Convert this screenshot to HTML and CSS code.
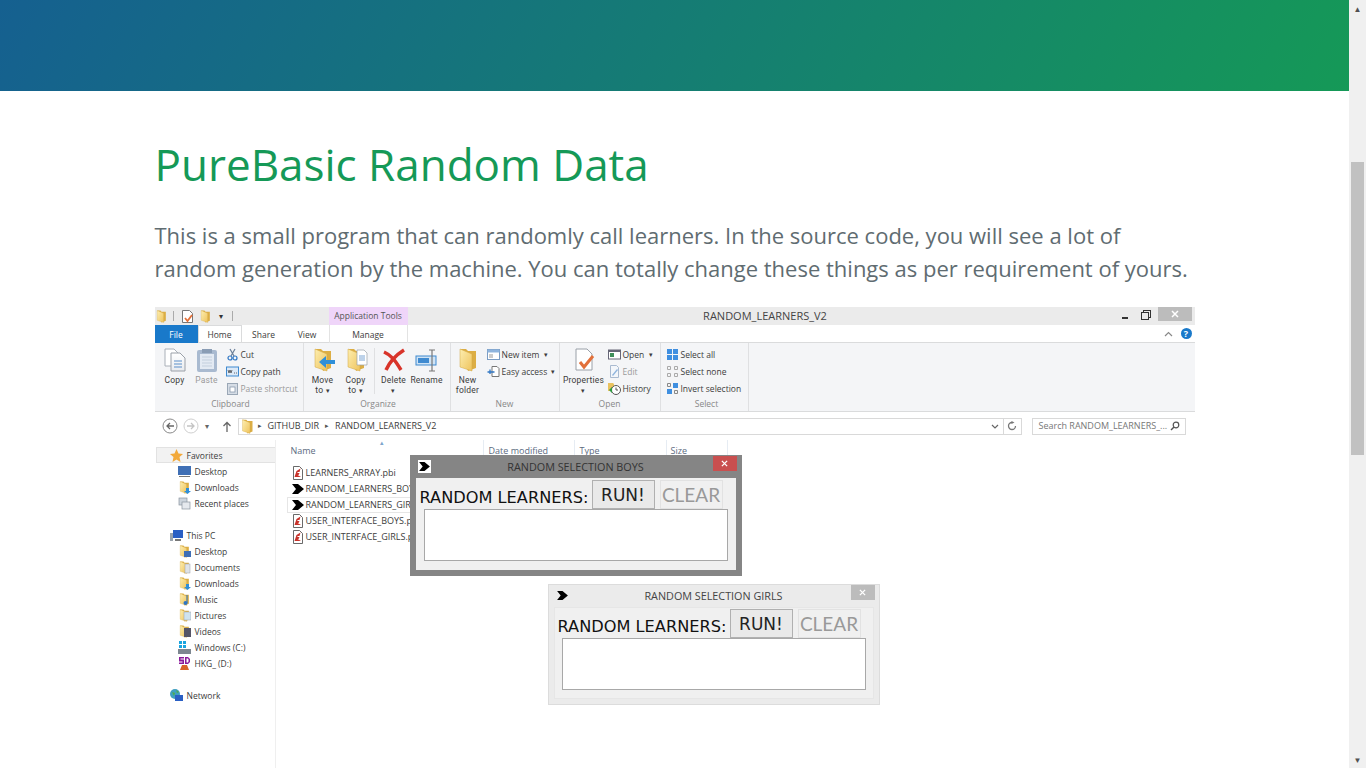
FILE: index.html
```html
<!DOCTYPE html>
<html>
<head>
  <title>PureBasic Random Data</title>
  <link rel="stylesheet" href="styles.css">
</head>
<body>
  <svg class="defs" width="0" height="0">
    <defs>
      <linearGradient id="folderfront" x1="0" y1="0" x2="1" y2="1"><stop offset="0" stop-color="#fdeeb0"/><stop offset="1" stop-color="#eec35c"/></linearGradient>
      <linearGradient id="pagefill" x1="0" y1="0" x2="0" y2="1"><stop offset="0" stop-color="#fff"/><stop offset="1" stop-color="#e8ebef"/></linearGradient>
    </defs>
    <symbol id="folder" viewBox="0 0 24 24"><path d="M4 1h6l2 2h8v17l-8 3z" fill="#dcae45"/><path d="M4 1l12 5v17L4 19z" fill="url(#folderfront)" stroke="#d3a641" stroke-width=".5"/></symbol>
    <symbol id="pbfile" viewBox="0 0 12 14"><path d="M1.500 .5h6l3 3v10h-9z" fill="#fff" stroke="#444" stroke-width=".8"/><path d="M2.500 11l2-6 4-2.500-1 3.500H5.500v1h2l-1 2H5.500l3.500 2z" fill="#c8322a"/></symbol>
    <symbol id="chevron" viewBox="0 0 12 10"><path d="M0 0h6l6 5-6 5H0l4-5z" fill="#000"/></symbol>
    <symbol id="doc" viewBox="0 0 24 24"><path d="M4 1h11l5 5v17H4z" fill="url(#pagefill)" stroke="#9aa0a8"/><path d="M15 1v5h5" fill="#e6e8ea" stroke="#9aa0a8"/></symbol>
    <symbol id="close" viewBox="0 0 8 8"><path d="M1 1l6 6M7 1L1 7" stroke="#fff" stroke-width="1.500"/></symbol>
  </svg>

  <div class="page">
    <div class="content">
      <header class="banner"></header>
      <main class="main">
        <h1>PureBasic Random Data</h1>
        <p class="intro">This is a small program that can randomly call learners. In the source code, you will see a lot of random generation by the machine. You can totally change these things as per requirement of yours.</p>

        <div class="shot">
          <div class="titlebar">
            <div class="qat">
              <svg class="ic13"><use href="#folder"/></svg><i class="qat-sep"></i>
              <svg class="ic13 qat-doc" viewBox="0 0 13 13"><path d="M1.500 .5h7l3 3v9h-10z" fill="#fff" stroke="#777"/><path d="M4 8l2.500 3L11 5" fill="none" stroke="#e2703a" stroke-width="1.800"/></svg>
              <svg class="ic13"><use href="#folder"/></svg>
              <span class="qat-drop">▾</span><i class="qat-sep"></i>
            </div>
            <div class="apptools">Application Tools</div>
            <div class="wintitle">RANDOM_LEARNERS_V2</div>
            <div class="winbtns">
              <i class="min"></i><i class="max"></i>
              <span class="winclose"><svg width="8" height="8"><use href="#close"/></svg></span>
            </div>
          </div>

          <div class="tabs">
            <span class="tab tab-file">File</span>
            <span class="tab tab-active">Home</span>
            <span class="tab tab-share">Share</span>
            <span class="tab tab-view">View</span>
            <span class="tab tab-manage">Manage</span>
            <span class="tabs-end">
              <svg width="9" height="6" viewBox="0 0 9 6"><path d="M1 5l3.500-3.500L8 5" fill="none" stroke="#888" stroke-width="1.200"/></svg>
              <span class="help">?</span>
            </span>
          </div>

          <div class="ribbon">
            <section class="group g-clip">
              <div class="group-body">
                <div class="big"><svg class="ic24" viewBox="0 0 24 24"><path d="M2 1h9l4 4v13H2z" fill="#fff" stroke="#aab0b8"/><path d="M8 5h9l5 5v13H8z" fill="url(#pagefill)" stroke="#9aa0a8"/><path d="M11 13h8M11 16h8M11 19h8" stroke="#5b8fc9"/></svg><span>Copy</span></div>
                <div class="big muted"><svg class="ic24" viewBox="0 0 24 24"><rect x="2" y="2" width="20" height="22" rx="2" fill="#a9bad0"/><path d="M5 6h14v15H5z" fill="#e3eaf3"/><path d="M7 9h10M7 12h10M7 15h10M7 18h10" stroke="#c3cfdd"/><path d="M7 1h10v4H7z" fill="#8a9db5"/></svg><span>Paste</span></div>
                <div class="smalls">
                  <div class="small"><svg class="ic13" viewBox="0 0 13 13"><path d="M4 1l4 7M9 1L5 8" stroke="#6a7f99" stroke-width="1.200"/><circle cx="4" cy="10" r="2" fill="none" stroke="#2f76c4" stroke-width="1.200"/><circle cx="9" cy="10" r="2" fill="none" stroke="#2f76c4" stroke-width="1.200"/></svg>Cut</div>
                  <div class="small"><svg class="ic13" viewBox="0 0 13 13"><rect x=".5" y="2" width="12" height="9" fill="#dce9f7" stroke="#3f8ad0"/><path d="M2 5l1 3 1-3 1 3 1-3M8 8h1M10 8h1" stroke="#333" stroke-width=".7" fill="none"/></svg>Copy path</div>
                  <div class="small muted"><svg class="ic13" viewBox="0 0 13 13"><rect x="1.500" y="1.500" width="10" height="11" fill="#d6dde6" stroke="#9aa7b6"/><rect x="4" y="5" width="5" height="5" fill="#fff" stroke="#7d8ea3" stroke-width=".7"/></svg>Paste shortcut</div>
                </div>
              </div>
              <div class="group-name">Clipboard</div>
            </section>

            <section class="group g-org">
              <div class="group-body">
                <div class="big"><svg class="ic24"><use href="#folder"/><path d="M24 12h-9V8l-7 6 7 6v-4h9z" fill="#2f8fd8"/></svg><span>Move<br>to <b class="caret">▾</b></span></div>
                <div class="big"><svg class="ic24"><use href="#folder"/><path d="M13 2h7l3 3v12H13z" fill="#fff" stroke="#9aa0a8" stroke-width=".7"/><path d="M15 8h6M15 10h6M15 12h6" stroke="#5b8fc9" stroke-width=".8"/></svg><span>Copy<br>to <b class="caret">▾</b></span></div>
                <i class="vsep"></i>
                <div class="big"><svg class="ic24" viewBox="0 0 24 24"><path d="M2 4c7 3 11 8 17 18M22 2C14 7 8 13 4 22" fill="none" stroke="#d8342a" stroke-width="3.500"/></svg><span>Delete<br><b class="caret">▾</b></span></div>
                <div class="big"><svg class="ic24" viewBox="0 0 24 24"><rect x="1" y="8" width="20" height="9" fill="#cfe3f5" stroke="#3f8ad0"/><rect x="3" y="10" width="11" height="5" fill="#3f8ad0"/><path d="M14 2h6M14 23h6M17 2v21" stroke="#777" stroke-width="1.200"/></svg><span>Rename</span></div>
              </div>
              <div class="group-name">Organize</div>
            </section>

            <section class="group g-new">
              <div class="group-body">
                <div class="big big-new"><svg class="ic24"><use href="#folder"/></svg><span>New<br>folder</span></div>
                <div class="smalls">
                  <div class="small"><svg class="ic13" viewBox="0 0 13 13"><rect x=".5" y="1.500" width="12" height="10" fill="#fff" stroke="#7a9cc4"/><path d="M.5 1.500h12v3H.5z" fill="#8fb4dd"/><path d="M2 7h4M2 9h4" stroke="#999"/></svg>New item <b class="caret">▾</b></div>
                  <div class="small"><svg class="ic13" viewBox="0 0 13 13"><path d="M5 1.500h5l2 2v8H5z" fill="#fff" stroke="#777"/><path d="M.5 7h7M3 4.500V9" stroke="#2f76c4" stroke-width="1.300"/></svg>Easy access <b class="caret">▾</b></div>
                </div>
              </div>
              <div class="group-name">New</div>
            </section>

            <section class="group g-open">
              <div class="group-body">
                <div class="big big-prop"><svg class="ic24" viewBox="0 0 24 24"><path d="M4 1h11l5 5v16H4z" fill="#fff" stroke="#9aa0a8"/><path d="M8 14l4 5 9-11" fill="none" stroke="#e2703a" stroke-width="3"/></svg><span>Properties<br><b class="caret">▾</b></span></div>
                <div class="smalls">
                  <div class="small"><svg class="ic13" viewBox="0 0 13 13"><rect x=".5" y="2" width="12" height="9" fill="#fff" stroke="#667"/><path d="M.5 2h12v2H.5z" fill="#667"/><rect x="2" y="5" width="4" height="4" fill="#3f8f5a"/></svg>Open <b class="caret">▾</b></div>
                  <div class="small muted"><svg class="ic13" viewBox="0 0 13 13"><path d="M2.500 .5h6l2 2v10h-8z" fill="#f3f6fa" stroke="#a9bad0"/><path d="M4 10l5-6 1 1-5 6z" fill="#8fb4dd"/></svg>Edit</div>
                  <div class="small"><svg class="ic13" viewBox="0 0 13 13"><path d="M0 1h5l1 1v7H0z" fill="#e9c25f"/><circle cx="8" cy="8" r="4.500" fill="#fff" stroke="#555"/><path d="M8 5.500V8h2" stroke="#555" fill="none"/><path d="M1 8l3-3v6z" fill="#2f9a3f"/></svg>History</div>
                </div>
              </div>
              <div class="group-name">Open</div>
            </section>

            <section class="group g-sel">
              <div class="group-body">
                <div class="smalls">
                  <div class="small"><svg class="ic13" viewBox="0 0 13 13"><path d="M1 1h5v5H1zM7 1h5v5H7zM1 7h5v5H1zM7 7h5v5H7z" fill="#3f8fe0"/></svg>Select all</div>
                  <div class="small"><svg class="ic13" viewBox="0 0 13 13"><path d="M1.500 1.500h3v3h-3zM8.500 1.500h3v3h-3zM1.500 8.500h3v3h-3zM8.500 8.500h3v3h-3z" fill="none" stroke="#aaa"/></svg>Select none</div>
                  <div class="small"><svg class="ic13" viewBox="0 0 13 13"><path d="M1.500 1.500h3v3h-3zM8.500 8.500h3v3h-3z" fill="none" stroke="#888"/><path d="M7 1h5v5H7zM1 7h5v5H1z" fill="#3f8fe0"/></svg>Invert selection</div>
                </div>
              </div>
              <div class="group-name">Select</div>
            </section>
          </div>

          <div class="addressbar">
            <span class="navbtn"><svg width="16" height="16" viewBox="0 0 16 16"><circle cx="8" cy="8" r="7" fill="#fff" stroke="#8a8a8a"/><path d="M12 8H5M8 5L5 8l3 3" fill="none" stroke="#666" stroke-width="1.300"/></svg></span>
            <span class="navbtn"><svg width="16" height="16" viewBox="0 0 16 16"><circle cx="8" cy="8" r="7" fill="#fff" stroke="#d0d0d0"/><path d="M4 8h7M8 5l3 3-3 3" fill="none" stroke="#c4c4c4" stroke-width="1.300"/></svg></span>
            <span class="navdrop">▾</span>
            <span class="navup"><svg width="10" height="11" viewBox="0 0 10 11"><path d="M5 11V2M1.500 5L5 1.500 8.500 5" fill="none" stroke="#666" stroke-width="1.300"/></svg></span>
            <div class="pathbox">
              <svg class="ic15 path-folder"><use href="#folder"/></svg>
              <span class="crumb-arrow">▸</span><span>GITHUB_DIR</span>
              <span class="crumb-arrow">▸</span><span>RANDOM_LEARNERS_V2</span>
              <span class="path-drop"><svg width="8" height="5" viewBox="0 0 8 5"><path d="M1 1l3 3 3-3" fill="none" stroke="#666" stroke-width="1.200"/></svg></span>
              <span class="path-refresh"><svg width="10" height="10" viewBox="0 0 10 10"><path d="M8.500 5A3.500 3.500 0 1 1 5 1.500" fill="none" stroke="#777" stroke-width="1.300"/><path d="M4.500 0l3 1.500-3 1.500z" fill="#777"/></svg></span>
            </div>
            <div class="searchbox">Search RANDOM_LEARNERS_...<svg width="10" height="10" viewBox="0 0 10 10"><circle cx="6" cy="4" r="2.800" fill="none" stroke="#555" stroke-width="1.200"/><path d="M4 6L1 9" stroke="#555" stroke-width="1.500"/></svg></div>
          </div>

          <div class="explorer">
            <nav class="navpane">
              <div class="nav-row nav-top nav-hover"><svg class="ic13" viewBox="0 0 13 13"><path d="M6.500 0l2 4.500 4.500.5-3.500 3 1 5-4-2.500L2.500 13l1-5L0 5l4.500-.5z" fill="#f2a93b"/></svg>Favorites</div>
              <div class="nav-row"><svg class="ic13" viewBox="0 0 13 13"><rect y="1" width="13" height="9" fill="#3f6fb5"/><path d="M1 11h11v1H1z" fill="#777"/></svg>Desktop</div>
              <div class="nav-row"><svg class="ic13"><use href="#folder"/><path d="M8 7h3v3h2l-3.500 3L6 10h2z" fill="#2f8fd8"/></svg>Downloads</div>
              <div class="nav-row"><svg class="ic13" viewBox="0 0 13 13"><rect x="1" y="1" width="8" height="7" fill="#cdd5dd" stroke="#8a949e" stroke-width=".7"/><rect x="4" y="5" width="8" height="7" fill="#e5e9ee" stroke="#8a949e" stroke-width=".7"/></svg>Recent places</div>
              <div class="nav-row nav-top nav-gap"><svg class="ic13" viewBox="0 0 13 13"><path d="M3 1h10v8H3z" fill="#2a5fc4"/><path d="M0 4h3v8H0z" fill="#9aa3ad"/><path d="M5 10h6v2H5z" fill="#777"/></svg>This PC</div>
              <div class="nav-row"><svg class="ic13"><use href="#folder"/><rect x="6" y="6" width="7" height="6" fill="#3f6fb5"/></svg>Desktop</div>
              <div class="nav-row"><svg class="ic13"><use href="#folder"/><rect x="7" y="3" width="5" height="9" fill="#dfe3e8" stroke="#9aa0a8" stroke-width=".5"/></svg>Documents</div>
              <div class="nav-row"><svg class="ic13"><use href="#folder"/><path d="M8 7h3v3h2l-3.500 3L6 10h2z" fill="#2f8fd8"/></svg>Downloads</div>
              <div class="nav-row"><svg class="ic13"><use href="#folder"/><path d="M9 2v8" stroke="#2f76c4"/><circle cx="7.500" cy="10" r="2" fill="#2f76c4"/></svg>Music</div>
              <div class="nav-row"><svg class="ic13"><use href="#folder"/><rect x="6" y="3" width="7" height="8" fill="#cfe3f0" stroke="#9aa0a8" stroke-width=".5"/></svg>Pictures</div>
              <div class="nav-row"><svg class="ic13"><use href="#folder"/><rect x="6" y="3" width="7" height="9" fill="#556"/></svg>Videos</div>
              <div class="nav-row"><svg class="ic13" viewBox="0 0 13 13"><path d="M1 0h3v3H1zM5 0h3v3H5zM1 4h3v3H1zM5 4h3v3H5z" fill="#19a5e0"/><rect y="8" width="13" height="5" fill="#7d8790"/></svg>Windows (C:)</div>
              <div class="nav-row"><svg class="ic13" viewBox="0 0 13 13"><path d="M1 0h5v1.500H2.500v1H6V7H1V5.500h3.500v-1H1zM7 0h3l2 2v3l-2 2H7zm1.500 1.500v4H10l.5-1v-2l-.5-1z" fill="#8a1a9a"/><path d="M4 8h5l2 5H2z" fill="#d8642a"/></svg>HKG_ (D:)</div>
              <div class="nav-row nav-top nav-gap"><svg class="ic13" viewBox="0 0 13 13"><circle cx="5" cy="5" r="5" fill="#3f9fc0"/><path d="M2 3l3 1-1 3zM6 1l3 2-2 1z" fill="#4fae4a"/><rect x="5" y="6" width="8" height="6" fill="#2a5fc4"/></svg>Network</div>
            </nav>

            <div class="files">
              <div class="sort-arrow">▴</div>
              <div class="cols">
                <span class="col col-name">Name</span>
                <span class="col col-date">Date modified</span>
                <span class="col col-type">Type</span>
                <span class="col col-size">Size</span>
              </div>
              <div class="file"><svg class="ic-file"><use href="#pbfile"/></svg>LEARNERS_ARRAY.pbi</div>
              <div class="file"><svg class="ic-file"><use href="#chevron"/></svg>RANDOM_LEARNERS_BOYS.exe</div>
              <div class="file file-sel"><svg class="ic-file"><use href="#chevron"/></svg>RANDOM_LEARNERS_GIRLS.exe</div>
              <div class="file"><svg class="ic-file"><use href="#pbfile"/></svg>USER_INTERFACE_BOYS.pbf</div>
              <div class="file"><svg class="ic-file"><use href="#pbfile"/></svg>USER_INTERFACE_GIRLS.pbf</div>
            </div>
          </div>

          <div class="appwin win-boys">
            <div class="appwin-title">
              <span class="appwin-icon"><svg width="11" height="9"><use href="#chevron"/></svg></span>
              <span class="appwin-name">RANDOM SELECTION BOYS</span>
              <span class="appwin-close"><svg width="7" height="7"><use href="#close"/></svg></span>
            </div>
            <div class="appwin-body">
              <div class="appwin-row">
                <span class="learners">RANDOM LEARNERS:</span>
                <span class="btn-run">RUN!</span>
                <span class="btn-clear">CLEAR</span>
              </div>
              <div class="output"></div>
            </div>
          </div>

          <div class="appwin win-girls">
            <div class="appwin-title">
              <span class="appwin-icon"><svg width="11" height="9"><use href="#chevron"/></svg></span>
              <span class="appwin-name">RANDOM SELECTION GIRLS</span>
              <span class="appwin-close"><svg width="7" height="7"><use href="#close"/></svg></span>
            </div>
            <div class="appwin-body">
              <div class="appwin-row">
                <span class="learners">RANDOM LEARNERS:</span>
                <span class="btn-run">RUN!</span>
                <span class="btn-clear">CLEAR</span>
              </div>
              <div class="output"></div>
            </div>
          </div>
        </div>
      </main>
    </div>

    <aside class="scrollbar">
      <span class="sb-arrow">▲</span>
      <span class="sb-track"><span class="sb-thumb"></span></span>
      <span class="sb-arrow">▼</span>
    </aside>
  </div>
</body>
</html>
```

FILE: styles.css
```css
html, body {
  margin: 0;
  height: 100%;
  overflow: hidden;
}

body {
  font-family: "Open Sans", sans-serif;
  background-color: #fff;
  color: #606c71;
}

.defs {
  position: absolute;
}

.page {
  display: flex;
  height: 768px;
}

.content {
  flex: 1;
  overflow: hidden;
}

/* the page is scrolled, only the bottom of the tall banner shows */
.banner {
  height: 91px;
  background-image: linear-gradient(120deg, #155799, #159957);
  background-size: 100% 471px;
  background-position: bottom;
}

.main {
  width: 1040px;
  margin: 0 auto;
}

h1 {
  margin: 42px 0 0;
  font-size: 44px;
  line-height: 62px;
  font-weight: 400;
  color: #159957;
}

.intro {
  margin: 24px 0 0;
  font-size: 22px;
  line-height: 33px;
}

/* scrollbar */
.scrollbar {
  width: 17px;
  background-color: #f0f0f0;
  display: flex;
  flex-direction: column;
  align-items: center;
}

.sb-arrow {
  height: 17px;
  font-size: 8px;
  line-height: 17px;
  color: #505050;
}

.sb-track {
  flex: 1;
  width: 13px;
  padding-top: 145px;
}

.sb-thumb {
  display: block;
  height: 293px;
  background-color: #c1c1c1;
}

/* screenshot of the explorer window */
.shot {
  position: relative;
  margin-top: 22px;
  width: 1040px;
  height: 461px;
  font-size: 8.500px;
  line-height: 12px;
  color: #3c3c3c;
  overflow: hidden;
}

.ic13 {
  width: 13px;
  height: 13px;
  flex: none;
}

.ic15 {
  width: 15px;
  height: 15px;
  flex: none;
}

.ic24 {
  width: 24px;
  height: 24px;
  flex: none;
}

.titlebar {
  display: flex;
  align-items: center;
  height: 18px;
  background-color: #ebebeb;
}

.qat {
  display: flex;
  align-items: center;
  gap: 3px;
  width: 174px;
}

.qat-sep {
  width: 1px;
  height: 10px;
  background-color: #aaa;
  margin: 0 2px;
}

.qat-doc {
  margin: 0 2px;
}

.qat-drop {
  margin: 0 4px;
  font-size: 8px;
  color: #333;
}

.apptools {
  width: 79px;
  height: 18px;
  line-height: 17px;
  text-align: center;
  background-color: #efd5f9;
  color: #555;
}

.wintitle {
  flex: 1;
  padding-left: 3px;
  text-align: center;
  font-size: 11px;
  color: #444;
}

.winbtns {
  display: flex;
  align-items: center;
  width: 75px;
  height: 18px;
}

.min {
  width: 6px;
  height: 2px;
  margin: 4px 13px 0 2px;
  background-color: #333;
}

.max {
  width: 6px;
  height: 6px;
  margin-right: 9px;
  border: 1px solid #333;
  box-shadow: 2px -2px 0 -1px #ebebeb, 2px -2px 0 0 #333;
}

.winclose {
  display: flex;
  align-items: center;
  justify-content: center;
  width: 34px;
  height: 14px;
  margin-top: -4px;
  background-color: #bcbcbc;
}

.tabs {
  display: flex;
  align-items: center;
  height: 18px;
  background-color: #fff;
  border-bottom: 1px solid #dadbdc;
  box-sizing: border-box;
}

.tab {
  text-align: center;
  height: 18px;
  line-height: 19px;
}

.tab-file {
  width: 43px;
  background-color: #1979ca;
  color: #fff;
}

.tab-active {
  width: 44px;
  border: 1px solid #dadbdc;
  border-bottom: 0;
  box-sizing: border-box;
  line-height: 18px;
}

.tab-share {
  width: 44px;
}

.tab-view {
  width: 43px;
}

.tab-manage {
  width: 79px;
  border: 1px solid #e3e3e3;
  border-width: 0 1px;
  box-sizing: border-box;
}

.tabs-end {
  display: flex;
  align-items: center;
  gap: 8px;
  margin-left: auto;
  padding-right: 3px;
}

.help {
  width: 11px;
  height: 11px;
  line-height: 11px;
  border-radius: 50%;
  background-color: #1979ca;
  color: #fff;
  text-align: center;
  font-weight: 700;
  font-size: 9px;
}

.ribbon {
  display: flex;
  height: 69px;
  background-color: #f4f5f7;
  border-bottom: 1px solid #dadbdc;
  box-sizing: border-box;
}

.group {
  display: flex;
  flex-direction: column;
  border-right: 1px solid #dfe0e2;
  box-sizing: border-box;
}

.g-clip { width: 149px; padding-left: 4px; }
.g-org { width: 147px; padding-left: 3px; }
.g-new { width: 109px; }
.g-open { width: 101px; }
.g-sel { width: 88px; padding-left: 5px; }

.group-body {
  display: flex;
  flex: 1;
}

.group-name {
  height: 14px;
  line-height: 13px;
  text-align: center;
  color: #888;
}

.big {
  display: flex;
  flex-direction: column;
  align-items: center;
  flex: none;
  width: 32px;
  padding-top: 5px;
  text-align: center;
}

.big span {
  margin-top: 3px;
  font-family: Roboto, sans-serif;
  line-height: 10px;
  letter-spacing: .2px;
}

.g-org .big {
  margin-right: 1px;
}

.big-new {
  width: 34px;
  margin-right: 2px;
}

.big-prop {
  width: 48px;
  margin-right: 0;
}

.vsep {
  width: 1px;
  height: 46px;
  margin: 5px 3px 0 1px;
  background-color: #dfe0e2;
}

.muted {
  color: #9a9a9a;
}

.caret {
  font-size: 7px;
  font-weight: 400;
}

.smalls {
  display: flex;
  flex-direction: column;
  padding-top: 3px;
}

.g-clip .smalls { margin-left: 3px; }

.small {
  display: flex;
  align-items: center;
  gap: 2px;
  height: 17px;
  white-space: pre;
}

.addressbar {
  display: flex;
  align-items: center;
  height: 28px;
  padding: 0 9px 0 7px;
  font-size: 9px;
}

.navbtn {
  display: flex;
  margin-right: 5px;
}

.navdrop {
  width: 10px;
  margin-left: 1px;
  font-size: 8px;
  color: #666;
}

.navup {
  display: flex;
  margin: 0 6px 0 7px;
}

.pathbox {
  display: flex;
  align-items: center;
  flex: 1;
  gap: 6px;
  height: 17px;
  padding-left: 1px;
  border: 1px solid #d9d9d9;
  box-sizing: border-box;
}

.path-folder {
  margin-right: -3px;
}

.crumb-arrow {
  font-size: 7px;
  color: #555;
}

.path-drop {
  display: flex;
  align-items: center;
  justify-content: center;
  width: 16px;
  height: 15px;
  margin-left: auto;
}

.path-refresh {
  display: flex;
  align-items: center;
  justify-content: center;
  width: 17px;
  height: 15px;
  margin-left: -6px;
  border-left: 1px solid #d9d9d9;
}

.searchbox {
  display: flex;
  align-items: center;
  justify-content: space-between;
  width: 154px;
  height: 17px;
  margin-left: 10px;
  padding: 0 5px 0 6px;
  border: 1px solid #d9d9d9;
  box-sizing: border-box;
  color: #777;
}

.explorer {
  display: flex;
  height: 333px;
}

.navpane {
  width: 121px;
  padding-top: 7px;
  border-right: 1px solid #efefef;
  box-sizing: border-box;
}

.nav-row {
  display: flex;
  align-items: center;
  gap: 4px;
  height: 16px;
  padding: 1px 0 0 23px;
  box-sizing: border-box;
}

.nav-top {
  padding-left: 15px;
}

.nav-gap {
  margin-top: 16px;
}

.nav-hover {
  margin-left: 1px;
  padding-left: 13px;
  background-color: #f2f2f2;
  border: 1px solid #e2e2e2;
  border-right: 0;
}

.files {
  position: relative;
  flex: 1;
  padding: 0 0 0 12px;
  font-size: 9px;
}

.sort-arrow {
  position: absolute;
  left: 104px;
  top: -3px;
  font-size: 7px;
  color: #7fa6cc;
}

.cols {
  display: flex;
  height: 24px;
  margin-bottom: 1px;
  line-height: 22px;
  color: #5c6b7f;
}

.col {
  box-sizing: border-box;
  padding-left: 5px;
  border-right: 1px solid #e6ecf3;
}

.col-name { width: 196px; padding-left: 3px; }
.col-date { width: 91px; }
.col-type { width: 92px; }
.col-size { width: 61px; padding-left: 4px; }

.file {
  display: flex;
  align-items: center;
  gap: 2px;
  height: 16px;
  padding-left: 4px;
  white-space: nowrap;
}

.file-sel {
  width: 200px;
  margin-left: -1px;
  padding-left: 4px;
  border: 1px solid #e6e6e6;
  box-sizing: border-box;
}

.ic-file {
  width: 12px;
  height: 14px;
  flex: none;
}

/* the two program windows on top of explorer */
.appwin {
  position: absolute;
  width: 332px;
  height: 121px;
  padding: 0 6px 6px;
  box-sizing: border-box;
  display: flex;
  flex-direction: column;
}

.win-boys {
  left: 255px;
  top: 148px;
  background-color: #858585;
  color: #333;
}

.win-girls {
  left: 393px;
  top: 277px;
  background-color: #ebebeb;
  box-shadow: inset 0 0 0 1px #dcdcdc;
  color: #444;
}

.appwin-title {
  display: flex;
  align-items: center;
  height: 23px;
  flex: none;
  font-size: 10.800px;
}

.appwin-icon {
  display: flex;
  align-items: center;
  justify-content: center;
  width: 13px;
  height: 13px;
  margin-left: 2px;
}

.win-boys .appwin-icon {
  background-color: #fff;
}

.appwin-name {
  flex: 1;
  padding-left: 8px;
  text-align: center;
  white-space: nowrap;
}

.appwin-close {
  display: flex;
  align-items: center;
  justify-content: center;
  width: 24px;
  height: 15px;
  margin: -7px -1px 0 0;
}

.win-boys .appwin-close {
  background-color: #c94f4f;
}

.win-girls .appwin-close {
  background-color: #bcbcbc;
}

.appwin-body {
  flex: 1;
  background-color: #f0f0f0;
  padding: 2px 8px 0 4px;
}

.win-girls .appwin-body {
  box-shadow: inset 0 0 0 1px #e6e6e6;
}

.appwin-row {
  display: flex;
  align-items: center;
  height: 29px;
}

.learners {
  width: 172px;
  flex: none;
  padding-top: 7px;
  font-family: "DejaVu Sans", sans-serif;
  font-size: 16.200px;
  line-height: 20px;
  color: #111;
  white-space: nowrap;
}

.btn-run, .btn-clear {
  display: flex;
  align-items: center;
  justify-content: center;
  width: 63px;
  height: 29px;
  box-sizing: border-box;
  font-family: "DejaVu Sans", sans-serif;
  font-size: 17px;
}

.btn-run {
  border: 1px solid #b0b0b0;
  background-color: #e9e9e9;
  color: #222;
}

.btn-clear {
  margin-left: 5px;
  border: 1px solid #e2e2e2;
  font-family: Lato, sans-serif;
  font-size: 19px;
  color: #999;
}

.output {
  height: 52px;
  margin-left: 4px;
  background-color: #fff;
  border: 1px solid #a8a8a8;
  box-sizing: border-box;
}
```
